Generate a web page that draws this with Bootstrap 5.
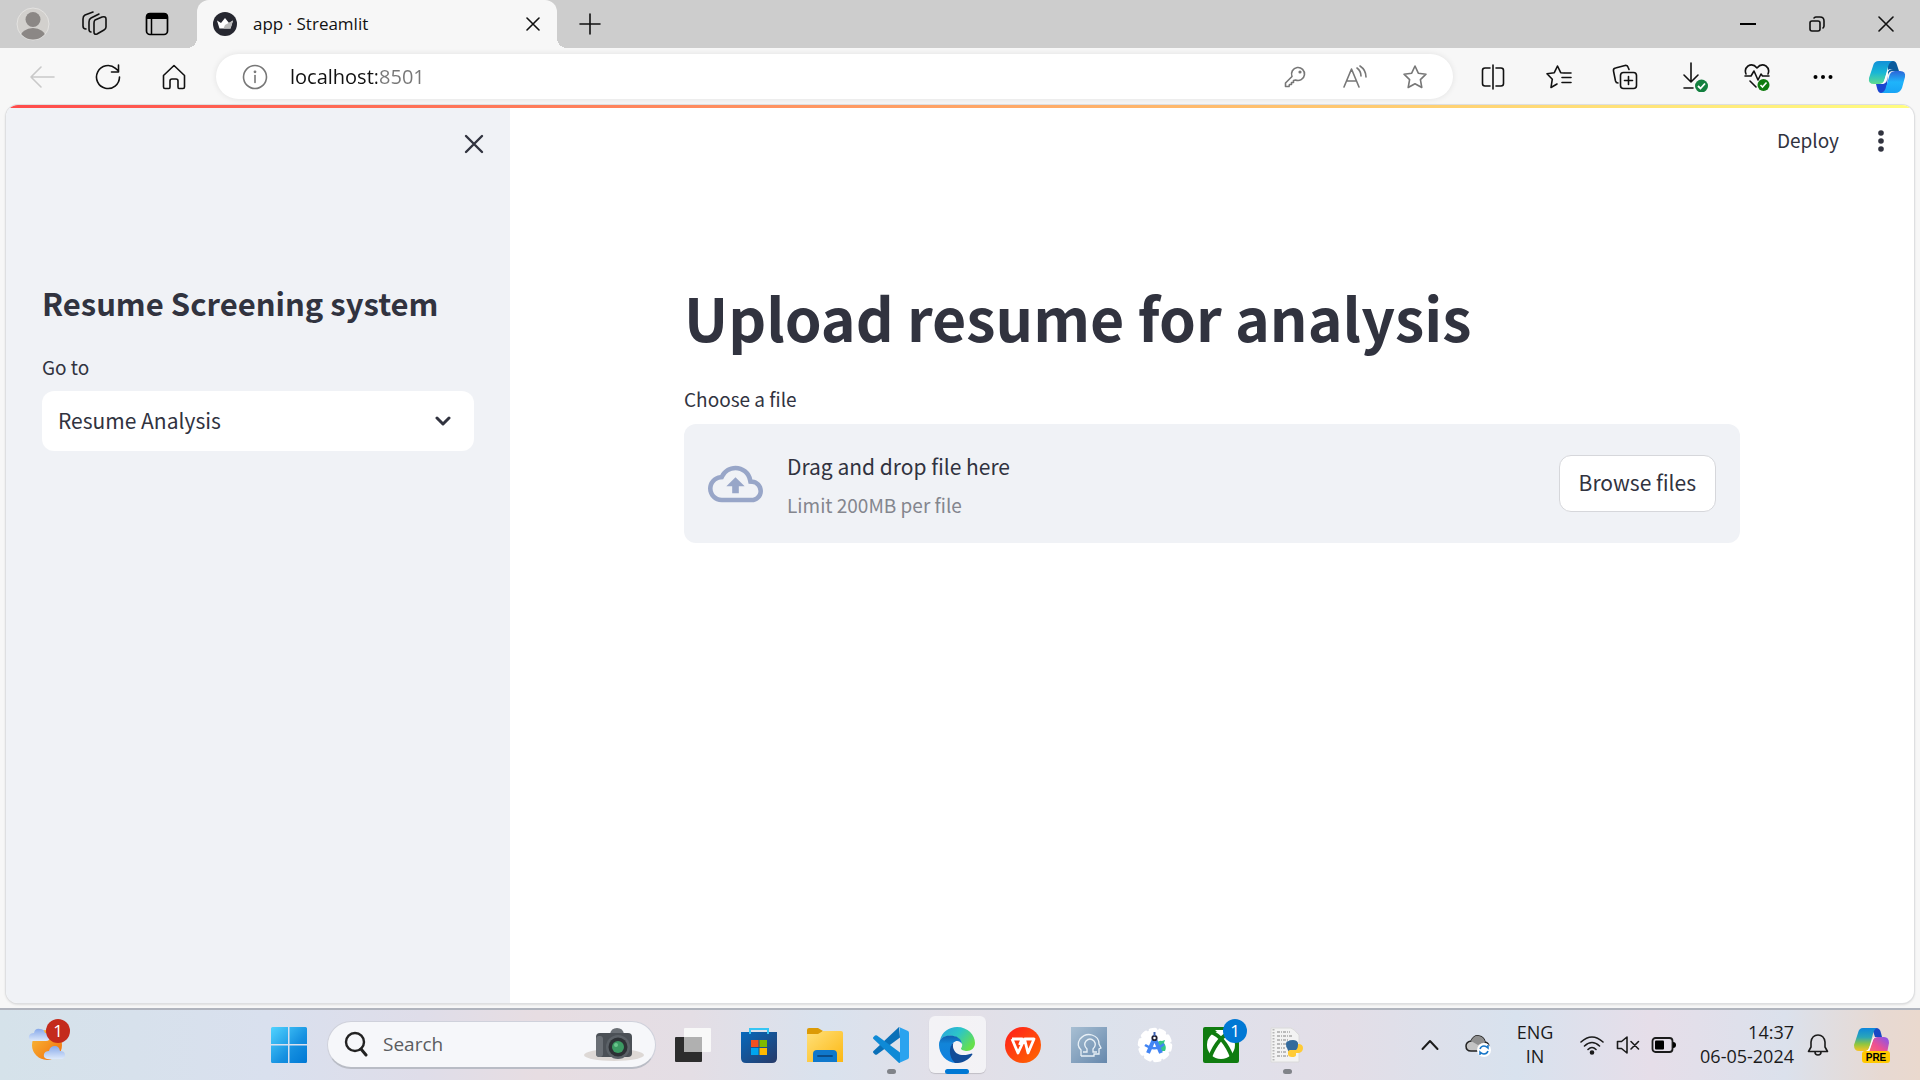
<!DOCTYPE html>
<html lang="en">
<head>
<meta charset="utf-8">
<meta name="viewport" content="width=device-width, initial-scale=1">
<title>app · Streamlit</title>
<link rel="stylesheet" href="https://cdn.jsdelivr.net/npm/bootstrap@5.3.0/dist/css/bootstrap.min.css">
<style>
:root { --ink: #31333f; --panel: #f0f2f6; }
body { background: #f7f7f7; color: #111; font-family: "Open Sans", "Noto Sans", sans-serif; font-size: 17px; }
svg { display: block; flex: none; }
.ico { display: flex; align-items: center; justify-content: center; flex: none; padding: 0; border: 0; background: none; color: inherit; }
.ln { fill: none; stroke: currentColor; stroke-width: 1.6; stroke-linecap: round; stroke-linejoin: round; }

/* button slot widths */
.w24 { width: 24px; }
.w36 { width: 36px; height: 36px; }
.w40 { width: 40px; }
.w48 { width: 48px; }
.w60 { width: 60px; }
.w66 { width: 66px; }
.w69 { width: 69px; }

/* browser chrome */
.tabstrip { background: #cdcdcd; height: 48px; padding-left: 13px; }
.tabstrip .ico { height: 48px; }
.browser-tab { position: relative; width: 360px; height: 48px; margin-left: 10px; background: #f7f7f7; border-radius: 12px 12px 0 0; padding: 0 12px 0 16px; }
.browser-tab::before, .browser-tab::after { content: ""; position: absolute; bottom: 0; width: 10px; height: 10px; }
.browser-tab::before { left: -10px; background: radial-gradient(circle at 0 0, #cdcdcd 10px, #f7f7f7 10px); }
.browser-tab::after { right: -10px; background: radial-gradient(circle at 100% 0, #cdcdcd 10px, #f7f7f7 10px); }
.tools { height: 57px; padding: 0 14px 0 9px; }
.tools .ico { height: 44px; }
.omnibox { height: 45px; border-radius: 23px; background: #fff; box-shadow: 0 0 6px rgba(0,0,0,.09); margin-left: 9px; margin-right: 7px; padding: 0 8px 0 19px; color: #777; }
.omnibox input { border: 0; outline: 0; padding: 0; margin-left: 15px; min-width: 0; height: 30px; line-height: 30px; font-size: 20px; color: #111; background: linear-gradient(90deg, #111 87px, #777 87px); -webkit-background-clip: text; background-clip: text; -webkit-text-fill-color: transparent; }

/* app frame */
.app-frame { position: relative; margin: 0 6px 5px; border-radius: 12px; background: #fff; overflow: hidden; font-family: "Noto Sans CJK SC", "Noto Sans", sans-serif; color: var(--ink); box-shadow: 0 0 0 1px #dedfe1, 0 1px 3px rgba(0,0,0,.2); }
.ribbon { position: absolute; inset: 0 0 auto 0; height: 3px; background: linear-gradient(90deg, #ff4b4b, #fffd80); }
.side { width: 504px; flex: none; background: var(--panel); }
.side-head { height: 78px; padding-right: 18px; }
.side-body { padding: 98px 36px 36px; }
.side-title { font-size: 31px; line-height: 44px; font-weight: 700; margin: 0 0 27px; }
.lbl { font-size: 19px; line-height: 30px; margin: 0; display: block; }
.pick { height: 60px; margin-top: 9px; border: 0; border-radius: 12px; padding: 0 60px 2px 16px; font-size: 21px; line-height: 36px; color: var(--ink); background-color: #fff; background-size: 16px 10px; background-position: right 23px center; background-image: url("data:image/svg+xml,%3Csvg xmlns='http://www.w3.org/2000/svg' viewBox='0 0 16 10'%3E%3Cpath d='M2 2l6 6 6-6' fill='none' stroke='%2331333f' stroke-width='3' stroke-linecap='round' stroke-linejoin='round'/%3E%3C/svg%3E"); }
.app-head { height: 72px; padding-right: 15px; }
.deploy { border: 0; padding: 0 0 2px; margin-right: 24px; font-size: 19px; line-height: 30px; color: var(--ink); }
.col-main { width: 100%; max-width: 1056px; margin: 0 auto; padding-top: 100px; }
.col-main h1 { font-size: 59px; line-height: 80px; font-weight: 700; margin: 0 0 27px; }
.drop { min-height: 119px; margin-top: 10px; border-radius: 12px; background: var(--panel); padding: 20px 24px; }
.drop-a { font-size: 21px; line-height: 36px; }
.drop-b { font-size: 19px; line-height: 30px; color: #84868e; margin-top: 6px; }
.browse { height: 57px; border: 1px solid #d6d7db; border-radius: 12px; background: #fff; color: var(--ink); padding: 0 19px 4px; font-size: 21px; line-height: 36px; }

/* taskbar */
.taskbar { height: 72px; border-top: 2px solid #b0b4bd; padding: 0 18px 1px 25px; background: linear-gradient(90deg, #d5e2ea 0, #d9e0ee 14%, #dfdde9 22%, #e7dde2 28%, #e4dee5 36%, #d9e2ee 43%, #e3dfe7 50%, #dce2ec 57%, #e0e0ea 64%, #e3dee7 70%, #d8e2ee 79%, #e6dee9 86%, #dbe1ec 93%, #e7d9d2 98%, #ead9ce 100%); color: #1b1b1b; }
.slot { position: relative; width: 66px; height: 69px; }
.weather { width: 44px; }
.start { margin-left: 187px; }
.slot.on::before { content: ""; position: absolute; inset: 6px 4px 6px 5px; border-radius: 6px; background: rgba(255,255,255,.6); box-shadow: 0 1px 1px rgba(0,0,0,.15); }
.slot svg { position: relative; }
.slot.run::after, .slot.on::after { content: ""; position: absolute; left: 50%; bottom: 5px; width: 9px; margin-left: -4px; height: 5px; border-radius: 3px; background: #808389; }
.slot.on::after { width: 24px; margin-left: -12px; background: #0078d4; }
.bubble { position: absolute; top: 9px; width: 24px; height: 24px; border-radius: 12px; color: #fff; font-size: 17px; line-height: 24px; text-align: center; }
.bubble-red { background: #c42b1c; left: 21px; }
.bubble-blue { background: #0078d4; left: 35px; }
.find { width: 329px; height: 48px; border-radius: 24px; margin-left: 5px; background: #f6f7fa; border: 1px solid #cfd1db; border-bottom: 2px solid #b9bcc5; padding: 0 10px 0 16px; }
.find input { border: 0; outline: 0; background: none; padding: 0; margin-left: 15px; min-width: 0; font-size: 19px; line-height: 28px; color: #333; }
.find input::placeholder { color: #5b5c60; opacity: 1; }
.tray-txt { font-size: 18px; line-height: 24px; padding-bottom: 2px; }
</style>
<script src="https://cdn.jsdelivr.net/npm/bootstrap@5.3.0/dist/js/bootstrap.bundle.min.js"></script>
</head>
<body class="d-flex flex-column min-vh-100">

<header>
  <div class="tabstrip d-flex align-items-center">
    <button class="ico w40" aria-label="Profile"><svg width="34" height="34" viewBox="0 0 34 34"><defs><clipPath id="av"><circle cx="17" cy="17" r="15.500"/></clipPath></defs><circle cx="17" cy="17" r="16" fill="#d2d0cd" stroke="#e4e3e1"/><g clip-path="url(#av)" fill="#8b8785"><circle cx="17" cy="12.500" r="7.500"/><ellipse cx="17" cy="30" rx="12.500" ry="9"/></g></svg></button>
    <button class="ico w66 ms-2" aria-label="Workspaces"><svg class="ln" width="26" height="26" viewBox="0 0 26 26"><path d="M14 9l7-3q4-1 4 2v8q0 2-2 3l-7 4q-3 1-3-2v-9q0-2 1-3z"/><path d="M10 21q-2 0-2-3v-7q0-3 2-4l8-4M5 18q-3 0-3-3V8q0-3 2-4l8-3"/></svg></button>
    <button class="ico w60" aria-label="Tab actions"><svg width="24" height="24" viewBox="0 0 24 24"><rect x="1.500" y="1.500" width="21" height="21" rx="3.500" fill="none" stroke="#000" stroke-width="1.700"/><path d="M1 7V5q0-4 4-4h14q4 0 4 4v2z"/><path d="M6.500 7v15" stroke="#000" stroke-width="1.500"/></svg></button>
    <div class="browser-tab d-flex align-items-center">
      <svg width="24" height="24" viewBox="0 0 24 24"><circle cx="12" cy="12" r="12" fill="#262730"/><path d="M4 8.500l4 2.500 4-5 4 5 4-2.500-2.500 8h-11z" fill="#fff"/><path d="M12 13l8-4.500-2.500 8h-7z" fill="#bbb"/></svg>
      <span class="ms-3">app · Streamlit</span>
      <button class="ico w24 ms-auto" aria-label="Close tab"><svg class="ln" width="14" height="14" viewBox="0 0 14 14"><path d="M1 1l12 12M13 1L1 13"/></svg></button>
    </div>
    <button class="ico w66" aria-label="New tab"><svg class="ln" width="22" height="22" viewBox="0 0 22 22"><path d="M11 1v20M1 11h20"/></svg></button>
    <div class="d-flex ms-auto">
      <button class="ico w69" aria-label="Minimize"><svg width="16" height="16" viewBox="0 0 16 16"><path d="M0 8h16" stroke="#000" stroke-width="2"/></svg></button>
      <button class="ico w69" aria-label="Restore"><svg class="ln" width="16" height="16" viewBox="0 0 16 16"><rect x="1" y="5" width="10" height="10" rx="2"/><path d="M5 2q1-1 2-1h4q4 0 4 4v5q0 1-1 2"/></svg></button>
      <button class="ico w69" aria-label="Close"><svg class="ln" width="16" height="16" viewBox="0 0 16 16"><path d="M1 1l14 14M15 1L1 15"/></svg></button>
    </div>
  </div>

  <div class="tools d-flex align-items-center">
    <button class="ico w66" aria-label="Back"><svg class="ln" width="26" height="24" viewBox="0 0 26 24"><path d="M25 12H2M12 2L2 12l10 10" stroke="#c9c9c9"/></svg></button>
    <button class="ico w66" aria-label="Refresh"><svg class="ln" width="26" height="26" viewBox="0 0 26 26"><path d="M24.500 13a11.500 11.500 0 1 1-4-8.700L23.500 7M23.500 1v7h-7"/></svg></button>
    <button class="ico w66" aria-label="Home"><svg class="ln" width="24" height="26" viewBox="0 0 24 26"><path d="M1.500 11.500L12 1.500l10.500 10V23q0 1.500-1.500 1.500h-4q-1 0-1-1.500v-6q0-2-2-2h-4q-2 0-2 2v6q0 1.500-1 1.500H3q-1.500 0-1.500-1.500z"/></svg></button>
    <div class="omnibox d-flex align-items-center flex-grow-1">
      <button class="ico w40" aria-label="Site information"><svg class="ln" width="26" height="26" viewBox="0 0 26 26"><circle cx="13" cy="13" r="11.500"/><path d="M13 11.500v7"/><circle cx="13" cy="7.800" r=".6" fill="currentColor"/></svg></button>
      <input class="flex-grow-1" type="text" aria-label="Address" value="localhost:8501">
      <button class="ico w60" aria-label="Passwords"><svg class="ln" width="22" height="22" viewBox="0 0 22 22"><path d="M8 10.500A6.500 6.500 0 1 1 11.500 14l-2 .5v2H7.500v2H5.500l-.5 2H1.500v-3.500z"/><circle cx="16" cy="6" r=".8"/></svg></button>
      <button class="ico w60" aria-label="Read aloud"><svg class="ln" width="24" height="24" viewBox="0 0 24 24"><path d="M1 22L8.500 4 16 22M4 16h9M14 3q4 3 4 8M17 1q6 4 6 11"/></svg></button>
      <button class="ico w60" aria-label="Add to favorites"><svg class="ln" width="26" height="26" viewBox="0 0 26 26"><path d="M13 2l3.300 7.200 7.700 1-5.600 5.400 1.400 7.900L13 19.700l-6.800 3.800 1.400-7.900L2 10.200l7.700-1z"/></svg></button>
    </div>
    <button class="ico w66" aria-label="Split screen"><svg class="ln" width="24" height="26" viewBox="0 0 24 26"><path d="M12 1v24M9 4H4Q1.500 4 1.500 6.500v13Q1.500 22 4 22h5M15 4h5q2.500 0 2.500 2.500v13q0 2.500-2.500 2.500h-5"/></svg></button>
    <button class="ico w66" aria-label="Favorites"><svg class="ln" width="26" height="26" viewBox="0 0 26 26"><path d="M18 9l-3.300-.3L11.500 2 8.300 8.700 1 9.800l5.300 5.400L5 23.500l6-3.500M16 13.500h9M16 18.500h9M18.500 9H25"/></svg></button>
    <button class="ico w66" aria-label="Collections"><svg class="ln" width="26" height="26" viewBox="0 0 26 26"><rect x="8.500" y="8.500" width="16" height="16" rx="3"/><path d="M16.500 12.500v8M12.500 16.500h8M6 19Q4 19 3.500 17L1.500 7Q1 4.500 3.500 4L13 1.500q2.500-.5 3.200 2L17 5.500"/></svg></button>
    <button class="ico w66 ps-2" aria-label="Downloads"><svg width="28" height="30" viewBox="0 0 28 30"><path class="ln" d="M10 1v19M3 13l7 7 7-7M3 26h9"/><circle cx="20.500" cy="24" r="6.500" fill="#148040"/><path d="M17 24l2.500 2.500 4.500-5" stroke="#fff" stroke-width="1.800" fill="none"/></svg></button>
    <button class="ico w66" aria-label="Browser essentials"><svg width="26" height="28" viewBox="0 0 26 28"><path class="ln" d="M2 11Q0 6 4 3q5-3 9 2 4-5 9-2 4 3 2 8M1 13h6l3-5 4 9 3-6 1.500 2H25M6 18l6 6"/><circle cx="19.500" cy="22" r="6" fill="#107c10"/><path d="M16.500 22l2 2 4-4.500" stroke="#fff" stroke-width="1.600" fill="none"/></svg></button>
    <button class="ico w66" aria-label="Settings and more"><svg width="20" height="6" viewBox="0 0 20 6"><circle cx="2.500" cy="3" r="2"/><circle cx="10" cy="3" r="2"/><circle cx="17.500" cy="3" r="2"/></svg></button>
    <button class="ico ms-2 ps-1" aria-label="Copilot"><svg width="38" height="34" viewBox="0 0 38 34"><defs><linearGradient id="cA" x1="0" y1="0" x2="0" y2="1"><stop offset="0" stop-color="#1290d8"/><stop offset=".5" stop-color="#18b6d6"/><stop offset="1" stop-color="#5fdc8e"/></linearGradient><linearGradient id="cB" x1="0" y1="1" x2="0" y2="0"><stop offset="0" stop-color="#18a4f5"/><stop offset=".5" stop-color="#1fb4fb"/><stop offset="1" stop-color="#2b66d8"/></linearGradient></defs><path d="M20 1h5q3 0 4 4l2 6h-6q-4 0-5 4z" fill="#0a5a9c"/><path d="M13 33q-3 0-4-5l-1-4h6q4 0 5-4l1-4-2 17z" fill="#1a46d0"/><path d="M11 1h14q-4 1-5 6l-3 11q-1 6-6 6H6q-6 0-5-6L5 6q1-5 6-5z" fill="url(#cA)"/><path d="M27 33H13q4-1 5-6l3-10q1-6 6-6h5q6 0 5 6l-3 11q-2 5-7 5z" fill="url(#cB)"/><path d="M17 22l3-10q1-3 5-3h-3q-2 0-3 3l-3 9q-1 3-4 3 4 0 5-2z" fill="#fff"/></svg></button>
  </div>
</header>

<main class="app-frame d-flex flex-grow-1">
  <aside class="side">
    <div class="side-head d-flex align-items-center justify-content-end">
      <button class="ico w36" aria-label="Close sidebar"><svg class="ln" width="20" height="20" viewBox="0 0 20 20"><path d="M2 2l16 16M18 2L2 18" stroke-width="2.400"/></svg></button>
    </div>
    <div class="side-body">
      <h2 class="side-title">Resume Screening system</h2>
      <label class="lbl" for="goto">Go to</label>
      <select class="form-select pick" id="goto"><option>Resume Analysis</option></select>
    </div>
  </aside>
  <section class="flex-grow-1">
    <div class="app-head d-flex align-items-center justify-content-end">
      <button class="btn deploy">Deploy</button>
      <button class="ico w36" aria-label="Main menu"><svg width="6" height="22" viewBox="0 0 6 22" fill="#31333f"><circle cx="3" cy="3" r="2.800"/><circle cx="3" cy="11" r="2.800"/><circle cx="3" cy="19" r="2.800"/></svg></button>
    </div>
    <div class="col-main">
      <h1>Upload resume for analysis</h1>
      <label class="lbl" for="file">Choose a file</label>
      <div class="drop d-flex align-items-center">
        <svg width="55" height="38" viewBox="0 0 24 16" fill="#98a6c8" class="me-4"><path d="M19.350 6.040A7.490 7.490 0 0 0 12 0C9.110 0 6.600 1.640 5.350 4.040A5.994 5.994 0 0 0 0 10c0 3.310 2.690 6 6 6h13c2.760 0 5-2.240 5-5 0-2.640-2.050-4.780-4.650-4.960zM19 14H6c-2.210 0-4-1.790-4-4 0-2.050 1.530-3.760 3.560-3.970l1.070-.11.5-.95A5.469 5.469 0 0 1 12 2c2.620 0 4.880 1.860 5.390 4.430l.3 1.500 1.530.11A2.980 2.980 0 0 1 22 11c0 1.650-1.350 3-3 3zM8 9h2.550v3h2.900V9H16l-4-4z"/></svg>
        <div class="flex-grow-1">
          <div class="drop-a">Drag and drop file here</div>
          <div class="drop-b">Limit 200MB per file</div>
        </div>
        <input class="visually-hidden" type="file" id="file">
        <button class="browse" type="button">Browse files</button>
      </div>
    </div>
  </section>
  <div class="ribbon"></div>
</main>

<footer class="taskbar d-flex align-items-center">
  <button class="ico slot weather" aria-label="Weather"><svg width="38" height="38" viewBox="0 0 38 38"><defs><linearGradient id="sun" x1="0" y1="0" x2="1" y2="1"><stop offset="0" stop-color="#f8bf3c"/><stop offset="1" stop-color="#f26a08"/></linearGradient><linearGradient id="cl" x1="0" y1="0" x2="0" y2="1"><stop offset="0" stop-color="#87a9ea"/><stop offset="1" stop-color="#dde9fb"/></linearGradient></defs><circle cx="19" cy="19" r="15" fill="url(#sun)"/><path d="M4 15q-4-1-3-5 1-3 5-3 1-5 6-4 4 0 5 4 5 0 5 4t-4 4z" fill="url(#cl)"/><path d="M19 33q-4-1-3-5 1-3 5-3 1-5 6-5 4 0 5 5 5 0 5 4t-4 4z" fill="url(#cl)"/></svg><span class="bubble bubble-red">1</span></button>
  <button class="ico slot start" aria-label="Start"><svg width="36" height="36" viewBox="0 0 36 36"><defs><linearGradient id="win" x1="0" y1="0" x2="1" y2="1"><stop offset="0" stop-color="#50d3ff"/><stop offset=".6" stop-color="#1590e0"/><stop offset="1" stop-color="#0078d4"/></linearGradient></defs><path fill="url(#win)" d="M1.500 0H17v17H0V1.500Q0 0 1.500 0zM18.500 0h16Q36 0 36 1.500V17H18.500zM0 18.500h17V36H1.500Q0 36 0 34.500zM18.500 18.500H36v16q0 1.500-1.500 1.500h-16z"/></svg></button>
  <div class="find d-flex align-items-center">
    <svg width="24" height="26" viewBox="0 0 24 26" fill="none" stroke="#222" stroke-width="2.400" stroke-linecap="round"><circle cx="11" cy="11" r="9"/><path d="M17 18l5 6" stroke-width="3"/></svg>
    <input class="flex-grow-1" type="text" placeholder="Search" aria-label="Search">
    <svg width="62" height="36" viewBox="0 0 62 36"><ellipse cx="31" cy="29" rx="30" ry="6" fill="#ddd8d5"/><path d="M27 8q1-6 7-6t7 6z" fill="#6b7076"/><rect x="13" y="7" width="36" height="24" rx="4" fill="#4b5056"/><rect x="13" y="10" width="7" height="21" rx="3" fill="#6a6f75"/><circle cx="35" cy="21" r="12" fill="#5b6167"/><circle cx="35" cy="21" r="9.500" fill="#2d3135"/><circle cx="35" cy="21" r="6" fill="#3c9a63"/><circle cx="33" cy="19" r="2" fill="#6cc48d"/></svg>
  </div>
  <button class="ico slot ms-1" aria-label="Task view"><svg width="36" height="34" viewBox="0 0 36 34"><rect x="0" y="9" width="27" height="25" rx="1" fill="#2d2d2d"/><rect x="9" y="0" width="27" height="24" rx="1" fill="#f8f8f8"/><path d="M9 9h18v15H9z" fill="#b0b0b0"/></svg></button>
  <button class="ico slot" aria-label="Microsoft Store"><svg width="36" height="36" viewBox="0 0 36 36"><defs><linearGradient id="st" x1="0" y1="0" x2="1" y2="1"><stop offset="0" stop-color="#0669bd"/><stop offset="1" stop-color="#283a68"/></linearGradient></defs><path d="M0 5h36v26q0 5-5 5H5q-5 0-5-5z" fill="url(#st)"/><path d="M9 7V2h18v5" fill="none" stroke="#36c5f4" stroke-width="2"/><path d="M10 13h7.500v7H10z" fill="#f25022"/><path d="M18.500 13H26v7h-7.500z" fill="#7fba00"/><path d="M10 21h7.500v7H10z" fill="#00a4ef"/><path d="M18.500 21H26v7h-7.500z" fill="#ffb900"/></svg></button>
  <button class="ico slot" aria-label="File Explorer"><svg width="36" height="34" viewBox="0 0 36 34"><defs><linearGradient id="fo" x1="0" y1="0" x2="1" y2="1"><stop offset="0" stop-color="#ffe07a"/><stop offset="1" stop-color="#fcb813"/></linearGradient></defs><path d="M0 2q0-2 2-2h9l5 3-4 5H0z" fill="#dc9a06"/><path d="M0 6h11l5-3h18q2 0 2 2v29H0z" fill="url(#fo)"/><path d="M6 34v-8q0-4 4-4h16q4 0 4 4v8z" fill="#0f78cc"/><path d="M11 28h14" stroke="#0a4d8a" stroke-width="1.800" stroke-linecap="round"/></svg></button>
  <button class="ico slot run" aria-label="Visual Studio Code"><svg width="36" height="36" viewBox="0 0 36 36"><path d="M26 0l1 10.500L4 27.500q-1 .5-2 0L.5 26q-1-1 0-2z" fill="#0a70b8"/><path d="M4 8.500l23 17V36h-1L.5 12q-1-1 0-2L2 8.500q1-.5 2 0z" fill="#0f8ad6"/><path d="M26 0l9 4q1 .5 1 2v24q0 1.500-1 2l-9 4q1-1 1-3V3q0-2-1-3z" fill="#2aa3ef"/></svg></button>
  <button class="ico slot on" aria-label="Microsoft Edge"><svg width="36" height="36" viewBox="0 0 36 36"><defs><linearGradient id="e1" x1="0" y1="0" x2="1" y2=".6"><stop offset="0" stop-color="#2aa0e0"/><stop offset=".5" stop-color="#2cc5c8"/><stop offset="1" stop-color="#66e04c"/></linearGradient><linearGradient id="e2" x1="0" y1="0" x2="0" y2="1"><stop offset="0" stop-color="#105fae"/><stop offset=".3" stop-color="#1285d8"/><stop offset="1" stop-color="#0f7fe0"/></linearGradient></defs><path d="M1 13C3 5 10 0 18 0c11 0 18 8 18 16 0 5-4 8-8 8-3 0-6-1-6-2.500 1-1.500 1.500-3 1-5C21 11 15 8 9 9 5 9.500 2 11 1 13z" fill="url(#e1)"/><path d="M0 18C0 12 4 8.500 11 8.500S22.500 12 23 17c-2-3.500-6-4-8.500-1.500C11 19 10 28 17 36 7 35.500 0 27 0 18z" fill="url(#e2)"/><path d="M14.500 15.500C12.500 21 16 27.500 23 28c4 .3 7-.5 10-1.500.500.500.500 1 0 1.500-4 5.500-10 8.500-17 8C10 31 9 20 14.500 15.500z" fill="#124c98"/></svg></button>
  <button class="ico slot" aria-label="WPS Office"><svg width="36" height="36" viewBox="0 0 36 36"><defs><linearGradient id="wp" x1="0" y1="0" x2="1" y2="1"><stop offset="0" stop-color="#ff1c1c"/><stop offset="1" stop-color="#ff6a00"/></linearGradient></defs><circle cx="18" cy="18" r="18" fill="url(#wp)"/><path d="M7 12h10l-2.500 6M7 12l6 14 6.500-14 3.500 14 6-14h-9" fill="none" stroke="#fff" stroke-width="2.800" stroke-linejoin="round"/></svg></button>
  <button class="ico slot" aria-label="Assistant"><svg width="36" height="36" viewBox="0 0 36 36"><defs><linearGradient id="hd" x1="0" y1="0" x2="1" y2="1"><stop offset="0" stop-color="#a8bfd3"/><stop offset="1" stop-color="#6688ac"/></linearGradient></defs><path d="M0 0h36v36H0z" fill="url(#hd)"/><g fill="none" stroke="#e8f0f6" stroke-width="1.300"><path d="M10 29v-6Q5 18 9 12q5-6 12-4 7 2 7 9l2 4-2 1v5h-5v2H10"/><path d="M12 25h4v-3q-4-4-1-8 4-4 8 0 3 4-1 8v3h4"/></g></svg></button>
  <button class="ico slot" aria-label="Android Studio"><svg width="36" height="36" viewBox="0 0 36 36"><circle cx="18" cy="18" r="15.500" fill="#fff" stroke="#fff" stroke-width="3.500" stroke-linecap="round" stroke-dasharray="5 4.700"/><path d="M20 16q2-3 5-2l3-1-1 3q3 4 1 8h-6z" fill="#35c886"/><path d="M17.500 11L11 26M17.500 11L24 26" stroke="#4285f4" stroke-width="4"/><path d="M8 18q10 7 19-1" stroke="#4285f4" stroke-width="2.500" fill="none"/><circle cx="17.500" cy="11" r="2.200" fill="#fff" stroke="#223" stroke-width="1.800"/><path d="M17.500 5v4" stroke="#3a5fb0" stroke-width="2"/></svg></button>
  <button class="ico slot" aria-label="Xbox"><svg width="36" height="36" viewBox="0 0 36 36"><rect width="36" height="36" rx="2" fill="#107c10"/><circle cx="18" cy="18" r="14" fill="#fff"/><path d="M8 5q13 5 21 25M28 5Q15 10 7 30" fill="none" stroke="#107c10" stroke-width="4"/><path d="M12 3h12l-6 5z" fill="#fff"/></svg><span class="bubble bubble-blue">1</span></button>
  <button class="ico slot run" aria-label="Python file"><svg width="34" height="36" viewBox="0 0 34 36"><path d="M1 1h20q3 1 8 7v27H1z" fill="#f3f3f3" stroke="#dadada"/><path d="M3.500 2v32" stroke="#b8b8b8" stroke-width="2" stroke-dasharray="1.500 1.500"/><path d="M7 5h13M7 9h16M7 13h12M7 17h9M7 21h8M7 25h9M7 29h12" stroke="#a9a9a9" stroke-width="1.300" stroke-dasharray="3 1 1 1"/><path d="M17 21q-1-1-1-4 0-3 3-3 0-1 4-1t5 3v5q0 2-2 2h-5q-2 0-2 2-1-1-2-4z" fill="#336a9c"/><path d="M28 17q5 0 5 4t-4 5h-3v2q0 2-4 2t-4-3v-2q0-2 3-2h5q2-1 2-6z" fill="#ffcb36"/></svg></button>

  <div class="d-flex align-items-center ms-auto">
    <button class="ico w48" aria-label="Show hidden icons"><svg class="ln" width="18" height="12" viewBox="0 0 18 12"><path d="M1.500 10L9 2l7.500 8" stroke-width="2"/></svg></button>
    <button class="ico w48" aria-label="OneDrive"><svg width="26" height="24" viewBox="0 0 26 24"><path d="M6 18q-5 0-5-5 0-4 5-5 3-6 8-5 5 1 6 6 4 1 4 5 0 4-4 4z" fill="#c4c4c4" stroke="#222" stroke-width="1.500"/><path d="M6 8q3-6 8-5 5 1 6 6l-7 3z" fill="#8f8f8f"/><circle cx="19" cy="17" r="7" fill="#fff"/><path d="M15 16q1-3 4-3 2 0 4 2v-3M23 18q-1 3-4 3-2 0-4-2v3" fill="none" stroke="#1776c8" stroke-width="1.500"/></svg></button>
    <button class="ico w66 tray-txt text-center" aria-label="Keyboard layout">ENG<br>IN</button>
    <button class="ico w48" aria-label="Wi-Fi"><svg class="ln" width="24" height="20" viewBox="0 0 24 20"><path d="M1 7q11-10 22 0M4.500 11q7.500-7 15 0M8 14.500q4-4 8 0"/><circle cx="12" cy="17.500" r="1.500" fill="currentColor"/></svg></button>
    <button class="ico w24" aria-label="Volume muted"><svg class="ln" width="24" height="20" viewBox="0 0 24 20"><path d="M1.500 6.500h4L11 2v16l-5.500-4.500h-4zM15 6.500l7.500 7.500M22.500 6.500L15 14"/></svg></button>
    <button class="ico w48" aria-label="Battery"><svg width="26" height="18" viewBox="0 0 26 18"><rect x="1.500" y="2" width="20" height="14" rx="3" fill="none" stroke="#1b1b1b" stroke-width="1.800"/><rect x="4" y="4.500" width="9" height="9" rx="1"/><path d="M22 6q3 0 3 3t-3 3z"/></svg></button>
    <time class="tray-txt text-end ms-2 ps-1">14:37<br>06-05-2024</time>
    <button class="ico w48" aria-label="Notifications"><svg class="ln" width="22" height="24" viewBox="0 0 22 24"><path d="M1.500 18.500L4 14V9q1-7 7-7t7 7v5l2.500 4.500zM8 19q0 3 3 3t3-3"/></svg></button>
    <button class="ico w60" aria-label="Copilot preview"><svg width="36" height="36" viewBox="0 0 36 36"><defs><linearGradient id="p1" x1="0" y1="0" x2="0" y2="1"><stop offset="0" stop-color="#0d86dc"/><stop offset=".4" stop-color="#2aa6b8"/><stop offset=".7" stop-color="#8fc63f"/><stop offset="1" stop-color="#f7c325"/></linearGradient><linearGradient id="p2" x1="0" y1="1" x2="1" y2="0"><stop offset="0" stop-color="#ff7a5c"/><stop offset=".5" stop-color="#ee5091"/><stop offset="1" stop-color="#7c55f5"/></linearGradient></defs><path d="M18 1h4q4 0 5 5l1 4h-7z" fill="#1947c4"/><path d="M9 1h14q-3 1-4 6l-3 11q-1 6-5 6H5q-5 0-5-6L4 6q1-5 5-5z" fill="url(#p1)"/><path d="M11 28q4-1 5-6l3-9q1-3 5-3h6q5 0 5 6l-2 10H13z" fill="url(#p2)"/><path d="M16 22l3-9q1-3 4-3h-2q-2 0-3 3l-3 8q-1 3-3 3h2q2 0 2-2z" fill="#fff"/><rect x="8" y="24" width="28" height="12" rx="3" fill="#ffc800"/><text x="22" y="34" text-anchor="middle" font-family="Liberation Sans, sans-serif" font-weight="700" font-size="10">PRE</text></svg></button>
  </div>
</footer>
</body>
</html>
